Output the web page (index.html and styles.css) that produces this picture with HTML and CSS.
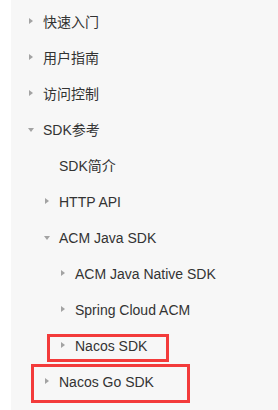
FILE: index.html
```html
<!DOCTYPE html>
<html lang="zh">
<head>
<meta charset="utf-8">
<title>SDK</title>
<link rel="stylesheet" href="styles.css">
</head>
<body>
<nav class="sidebar">
  <ul class="menu">
    <li class="item lv1"><span class="caret right"></span><span class="label">快速入门</span></li>
    <li class="item lv1"><span class="caret right"></span><span class="label">用户指南</span></li>
    <li class="item lv1"><span class="caret right"></span><span class="label">访问控制</span></li>
    <li class="item lv1"><span class="caret down"></span><span class="label">SDK参考</span></li>
    <li class="item lv2"><span class="caret none"></span><span class="label">SDK简介</span></li>
    <li class="item lv2"><span class="caret right"></span><span class="label">HTTP API</span></li>
    <li class="item lv2"><span class="caret down"></span><span class="label">ACM Java SDK</span></li>
    <li class="item lv3"><span class="caret right"></span><span class="label">ACM Java Native SDK</span></li>
    <li class="item lv3"><span class="caret right"></span><span class="label">Spring Cloud ACM</span></li>
    <li class="item lv3"><span class="caret right"></span><span class="label">Nacos SDK</span><span class="mark mark-a"></span></li>
    <li class="item lv2"><span class="caret right"></span><span class="label">Nacos Go SDK</span><span class="mark mark-b"></span></li>
  </ul>
</nav>
</body>
</html>
```
FILE: styles.css
```css
html, body {
  margin: 0;
  padding: 0;
  background: #ffffff;
}

.sidebar {
  margin-left: 11px;
  height: 410px;
  background: #f7f7f7;
  padding-top: 4px;
  box-sizing: border-box;
  font-family: "Liberation Sans", Arial, "Noto Sans CJK SC", sans-serif;
  font-size: 14px;
  color: #333333;
}

.menu {
  list-style: none;
  margin: 0;
  padding: 0;
}

.item {
  position: relative;
  height: 36px;
  display: flex;
  align-items: center;
  white-space: nowrap;
}

.lv1 { padding-left: 16px; }
.lv2 { padding-left: 32px; }
.lv3 { padding-left: 48px; }

.caret {
  width: 8px;
  height: 8px;
  margin-right: 8px;
  position: relative;
  flex: none;
}

.caret.right::before,
.caret.down::before {
  content: "";
  position: absolute;
  width: 0;
  height: 0;
}

.caret.right::before {
  left: 2px;
  top: 0;
  border-left: 4px solid #a3a3a3;
  border-top: 3.5px solid transparent;
  border-bottom: 3.5px solid transparent;
}

.caret.down::before {
  left: 1px;
  top: 2px;
  border-top: 4px solid #a3a3a3;
  border-left: 3.5px solid transparent;
  border-right: 3.5px solid transparent;
}

.label {
  line-height: 16px;
}

.mark {
  position: absolute;
  border: 3px solid #f33b3b;
  box-sizing: border-box;
}

.mark-a {
  left: 36px;
  top: 6px;
  width: 122px;
  height: 28px;
}

.mark-b {
  left: 20px;
  top: 0;
  width: 159px;
  height: 39px;
}
```
